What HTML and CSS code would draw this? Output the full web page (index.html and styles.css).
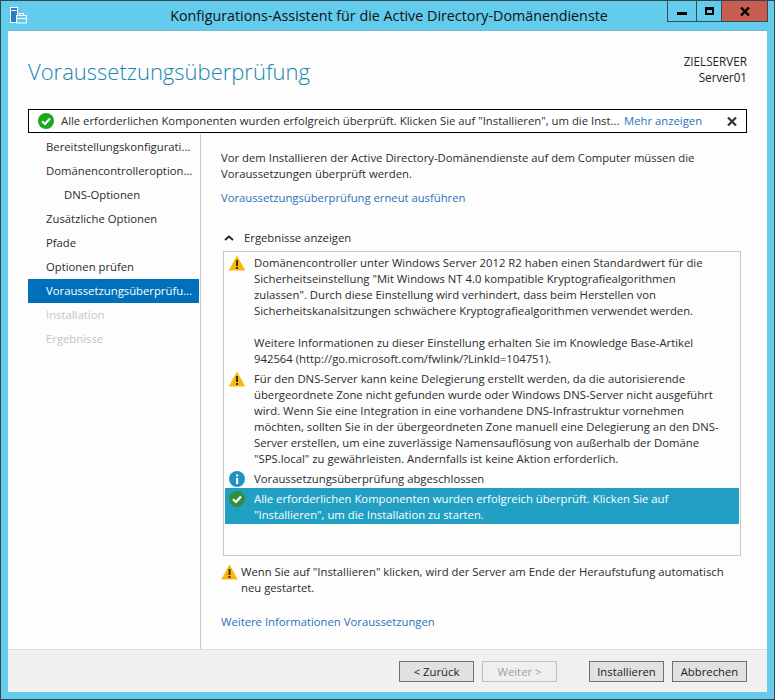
FILE: index.html
```html
<!DOCTYPE html>
<html lang="de">
<head>
    <meta charset="UTF-8">
    <title>Konfigurations-Assistent für die Active Directory-Domänendienste</title>
    <link rel="stylesheet" href="styles.css">
</head>
<body>
    <svg class="defs" width="0" height="0">
        <symbol id="warn" viewBox="0 0 17 16">
            <path d="M8.5 .5 L16.8 15.5 H.2 Z" fill="#f9b90c"/>
            <rect x="7.5" y="5" width="2" height="6" fill="#3b2f0a"/>
            <rect x="7.5" y="12" width="2" height="2" fill="#3b2f0a"/>
        </symbol>
        <symbol id="ok" viewBox="0 0 16 16">
            <circle cx="8" cy="8" r="8" fill="#1ba81f"/>
            <path d="M4 8.2 L7 11 L12 5.5" fill="none" stroke="#fff" stroke-width="2.2"/>
        </symbol>
    </svg>

    <div class="window">
        <div class="titlebar">
            <svg class="app-icon" width="17" height="17" viewBox="0 0 17 17">
                <rect x=".5" y=".5" width="7" height="15" fill="#2a7fc0" stroke="#fff"/>
                <rect x="1.5" y="3" width="5" height="1" fill="#fff"/>
                <rect x="6.5" y="8.5" width="10" height="7.5" fill="#63cbec" stroke="#fff"/>
                <rect x="9.5" y="6.5" width="4" height="2" fill="none" stroke="#fff"/>
                <rect x="7" y="11" width="9" height="1" fill="#fff"/>
            </svg>
            <div class="title">Konfigurations-Assistent für die Active Directory-Domänendienste</div>
            <div class="controls">
                <div class="ctl ctl-min"><span class="min-bar"></span></div>
                <div class="ctl ctl-max"><span class="max-box"></span></div>
                <div class="ctl ctl-close">
                    <svg width="10" height="9" viewBox="0 0 10 9"><path d="M1 .5 L9 8.5 M9 .5 L1 8.5" stroke="#000" stroke-width="2.4"/></svg>
                </div>
            </div>
        </div>

        <div class="client">
            <div class="header">
                <h1>Voraussetzungsüberprüfung</h1>
                <div class="server">ZIELSERVER<br>Server01</div>
            </div>

            <div class="notify">
                <svg class="icon-ok" width="16" height="16"><use href="#ok"/></svg>
                <span class="notify-text">Alle erforderlichen Komponenten wurden erfolgreich überprüft. Klicken Sie auf "Installieren", um die Inst...</span>
                <a class="link notify-more">Mehr anzeigen</a>
                <svg class="notify-x" width="10" height="9" viewBox="0 0 10 9"><path d="M1 .5 L9 8.5 M9 .5 L1 8.5" stroke="#333" stroke-width="2.2"/></svg>
            </div>

            <div class="columns">
                <ul class="nav">
                    <li>Bereitstellungskonfigurati...</li>
                    <li>Domänencontrolleroption...</li>
                    <li class="sub">DNS-Optionen</li>
                    <li>Zusätzliche Optionen</li>
                    <li>Pfade</li>
                    <li>Optionen prüfen</li>
                    <li class="active">Voraussetzungsüberprüfu...</li>
                    <li class="disabled">Installation</li>
                    <li class="disabled">Ergebnisse</li>
                </ul>

                <div class="main">
                    <p class="intro">Vor dem Installieren der Active Directory-Domänendienste auf dem Computer müssen die<br>Voraussetzungen überprüft werden.</p>
                    <a class="link rerun">Voraussetzungsüberprüfung erneut ausführen</a>

                    <div class="toggle">
                        <svg width="10" height="6" viewBox="0 0 10 6"><path d="M1 5 L5 1.5 L9 5" fill="none" stroke="#222" stroke-width="1.8"/></svg>
                        <span>Ergebnisse anzeigen</span>
                    </div>

                    <div class="results">
                        <div class="row">
                            <svg class="row-icon" width="17" height="16"><use href="#warn"/></svg>
                            <div>Domänencontroller unter Windows Server 2012 R2 haben einen Standardwert für die<br>Sicherheitseinstellung "Mit Windows NT 4.0 kompatible Kryptografiealgorithmen<br>zulassen". Durch diese Einstellung wird verhindert, dass beim Herstellen von<br>Sicherheitskanalsitzungen schwächere Kryptografiealgorithmen verwendet werden.<br><br>Weitere Informationen zu dieser Einstellung erhalten Sie im Knowledge Base-Artikel<br>942564 (http://go.microsoft.com/fwlink/?LinkId=104751).</div>
                        </div>
                        <div class="row">
                            <svg class="row-icon" width="17" height="16"><use href="#warn"/></svg>
                            <div>Für den DNS-Server kann keine Delegierung erstellt werden, da die autorisierende<br>übergeordnete Zone nicht gefunden wurde oder Windows DNS-Server nicht ausgeführt<br>wird. Wenn Sie eine Integration in eine vorhandene DNS-Infrastruktur vornehmen<br>möchten, sollten Sie in der übergeordneten Zone manuell eine Delegierung an den DNS-<br>Server erstellen, um eine zuverlässige Namensauflösung von außerhalb der Domäne<br>"SPS.local" zu gewährleisten. Andernfalls ist keine Aktion erforderlich.</div>
                        </div>
                        <div class="row">
                            <svg class="row-icon" width="16" height="16" viewBox="0 0 16 16">
                                <circle cx="8" cy="8" r="8" fill="#1f94c4"/>
                                <rect x="7" y="7" width="2.2" height="6" fill="#fff"/>
                                <rect x="7" y="3.5" width="2.2" height="2" fill="#fff"/>
                            </svg>
                            <div>Voraussetzungsüberprüfung abgeschlossen</div>
                        </div>
                        <div class="row selected">
                            <svg class="row-icon" width="16" height="16" viewBox="0 0 16 16">
                                <circle cx="8" cy="8" r="8" fill="#2f8f3a"/>
                                <path d="M4 8.2 L7 11 L12 5.5" fill="none" stroke="#fff" stroke-width="2.2"/>
                            </svg>
                            <div>Alle erforderlichen Komponenten wurden erfolgreich überprüft. Klicken Sie auf<br>"Installieren", um die Installation zu starten.</div>
                        </div>
                    </div>

                    <div class="restart-note">
                        <svg width="17" height="16"><use href="#warn"/></svg>
                        <div>Wenn Sie auf "Installieren" klicken, wird der Server am Ende der Heraufstufung automatisch<br>neu gestartet.</div>
                    </div>

                    <a class="link more-info">Weitere Informationen Voraussetzungen</a>
                </div>
            </div>

            <div class="footer">
                <button>&lt; Zurück</button>
                <button disabled>Weiter &gt;</button>
                <button class="gap-left">Installieren</button>
                <button>Abbrechen</button>
            </div>
        </div>
    </div>
</body>
</html>
```

FILE: styles.css
```css
html, body {
    margin: 0;
    padding: 0;
}
body {
    font-family: "Open Sans", "Liberation Sans", sans-serif;
    font-size: 11.3px;
    line-height: 16px;
    color: #2b2b2b;
}
.defs {
    display: block;
    height: 0;
}
.window {
    width: 775px;
    height: 700px;
    box-sizing: border-box;
    background-color: #63cbec;
    border: 1px solid #37474f;
    display: flex;
    flex-direction: column;
}
.titlebar {
    height: 30px;
    flex: none;
    display: grid;
    grid-template-columns: 1fr auto 1fr;
    padding: 0 6px 0 9px;
}
.app-icon {
    margin-top: 6px;
}
.title {
    font-size: 14.3px;
    line-height: 30px;
    color: #111;
}
.controls {
    display: flex;
    justify-self: end;
    height: 21px;
    box-sizing: border-box;
    border: 1px solid #3a4a52;
    border-top: none;
}
.ctl {
    display: flex;
    align-items: center;
    justify-content: center;
    width: 28px;
    border-left: 1px solid #3a4a52;
}
.ctl-min {
    border-left: none;
}
.ctl-max {
    width: 24px;
}
.ctl-close {
    width: 45px;
    background-color: #c75c50;
}
.min-bar {
    display: block;
    width: 10px;
    height: 3px;
    margin-top: 4px;
    background-color: #000;
}
.max-box {
    display: block;
    width: 5px;
    height: 3px;
    border: 2px solid #000;
    border-top-width: 3px;
}
.client {
    flex: 1;
    margin: 0 7px 7px;
    background-color: #fdfdfd;
    display: flex;
    flex-direction: column;
    box-shadow: 0 -1px 0 #7fb7cc;
}
.header {
    display: flex;
    justify-content: space-between;
    height: 78px;
    padding: 22px 20px 0;
    box-sizing: border-box;
}
h1 {
    margin: 0;
    font-size: 22px;
    font-weight: 300;
    line-height: 36px;
    color: #1a86ad;
}
.server {
    font-size: 11.7px;
    text-align: right;
    color: #222;
}
.notify {
    display: flex;
    align-items: center;
    height: 24px;
    box-sizing: border-box;
    margin: 0 20px;
    border: 1px solid #000;
    background-color: #fff;
    padding: 0 8px 0 9px;
    white-space: nowrap;
}
.icon-ok {
    flex: none;
}
.notify-text {
    margin-left: 7px;
    width: 563px;
}
.notify-x {
    margin-left: auto;
    margin-right: 1px;
}
.link {
    color: #2a72b8;
}
.columns {
    flex: 1;
    display: flex;
    padding: 1px 0 0 20px;
}
.nav {
    list-style: none;
    margin: 0;
    padding: 1px 0 0;
    width: 171px;
    flex: none;
    white-space: nowrap;
}
.nav li {
    height: 24px;
    line-height: 24px;
    padding-left: 18px;
    overflow: hidden;
}
.nav .sub {
    padding-left: 36px;
}
.nav .active {
    background-color: #0070bb;
    color: #fff;
}
.nav .disabled {
    color: #c4c4c4;
}
.main {
    flex: 1;
    margin-left: 1px;
    border-left: 1px solid #c8c8c8;
    padding: 16px 26px 0 20px;
    white-space: nowrap;
}
.intro {
    margin: 0;
}
.rerun {
    display: block;
    margin-top: 8px;
    font-size: 11.25px;
}
.toggle {
    display: flex;
    align-items: center;
    gap: 10px;
    margin-top: 24px;
    padding-left: 3px;
}
.results {
    margin: 5px 0 0 2px;
    height: 300px;
    border: 1px solid #c8c8c8;
    padding: 3px 1px 0;
}
.row {
    display: flex;
    gap: 8px;
    padding: 0 0 4px 3px;
}
.row-icon {
    flex: none;
    width: 18px;
}
.row.selected {
    height: 36px;
    box-sizing: border-box;
    margin-top: -3px;
    padding: 3px 0 0 3px;
    background-color: #22a0c4;
    color: #fff;
}
.restart-note {
    display: flex;
    gap: 3px;
    margin-top: 8px;
}
.more-info {
    display: block;
    margin-top: 18px;
}
.footer {
    flex: none;
    height: 43px;
    box-sizing: border-box;
    display: flex;
    justify-content: flex-end;
    gap: 8px;
    padding: 11px 20px 0 0;
    background-color: #f0f0f0;
    border-top: 1px solid #dcdcdc;
}
button {
    width: 75px;
    height: 21px;
    padding: 0;
    font-family: inherit;
    font-size: 11.3px;
    color: #222;
    background-color: #e1e1e1;
    border: 1px solid #707070;
}
button:disabled {
    color: #a0a0a0;
    background-color: #efefef;
    border-color: #bfbfbf;
}
.gap-left {
    margin-left: 24px;
}
```
